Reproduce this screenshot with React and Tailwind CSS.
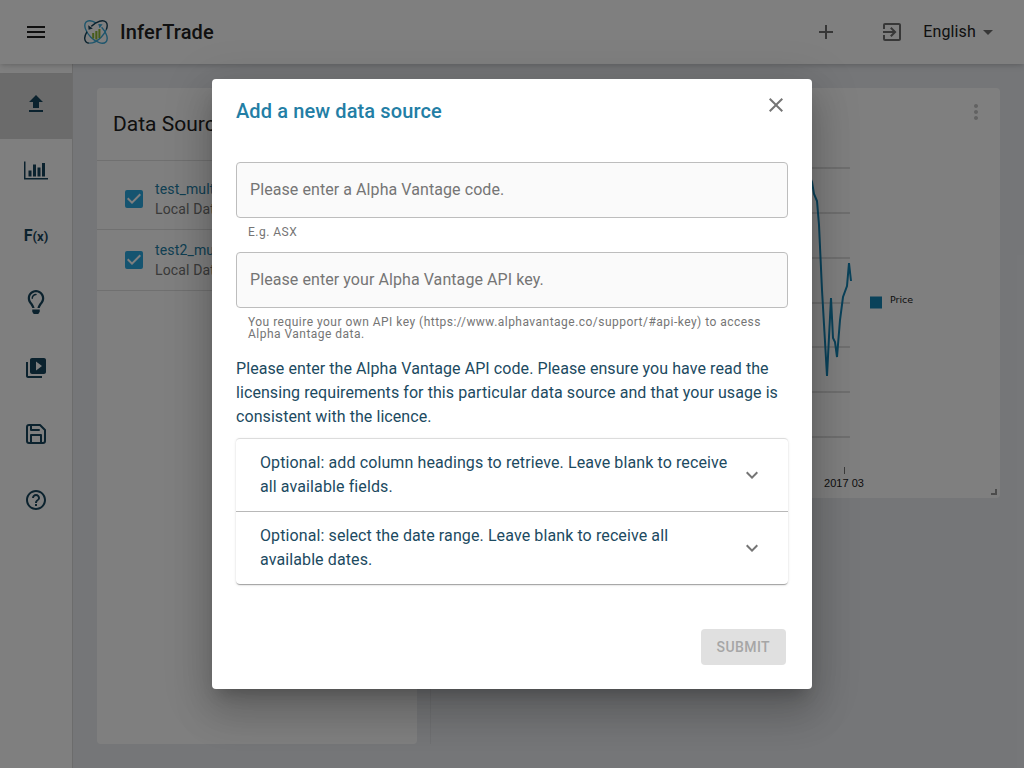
import React from 'react';
import {
  MdMenu, MdFileUpload, MdVideoLibrary, MdHelpOutline, MdAdd, MdExitToApp,
  MdArrowDropDown, MdMoreVert, MdClose, MdExpandMore, MdCheckBox,
} from 'react-icons/md';
import { FaRegLightbulb } from 'react-icons/fa';

function Logo() {
  return (
    <svg className="size-6" viewBox="0 0 24 24" fill="none">
      <g strokeWidth="1.4">
        <ellipse cx="12" cy="12" rx="14" ry="7.3" transform="rotate(45 12 12)" stroke="#3cabd9" pathLength="100" strokeDasharray="66 10 24 0" />
        <ellipse cx="12" cy="12" rx="14" ry="7.3" transform="rotate(-45 12 12)" stroke="#17455c" pathLength="100" strokeDasharray="12 33 21 10 24 0" />
        <ellipse cx="12" cy="12" rx="14" ry="7.3" transform="rotate(-45 12 12)" stroke="#3cabd9" pathLength="100" strokeDasharray="0 12 33 55" />
      </g>
      <path d="M4.2 5.2 L4.6 9.8 L8.8 8.4z" fill="#17455c" />
      <path d="M14.2 4 L18.6 4.2 L15.6 8.2z" fill="#3cabd9" />
      <path d="M8.2 13h2v5.500h-2zM11.300 11h2.100v8.500h-2.100zM14.400 9h2v9h-2z" fill="#8eb935" />
    </svg>
  );
}

function BarChartIcon() {
  return (
    <svg className="h-[21px] w-6" viewBox="0 0 2048 1792" fill="currentColor">
      <path d="M640 896v512h-256v-512h256zM1024 384v1024h-256v-1024h256zM2048 1536v128h-2048v-1536h128v1408h1920zM1408 640v768h-256v-768h256zM1792 256v1152h-256v-1152h256z" />
    </svg>
  );
}

function SaveIcon() {
  return (
    <svg className="size-6" viewBox="0 0 24 24" fill="none" stroke="currentColor" strokeWidth="2" strokeLinejoin="round" strokeLinecap="round">
      <path d="M19 21H5a2 2 0 0 1-2-2V5a2 2 0 0 1 2-2h11l5 5v11a2 2 0 0 1-2 2zM17 21v-8H7v8M7 3v5h8" />
    </svg>
  );
}

function NavItem({ selected, children }) {
  return (
    <div className={`flex h-[66px] items-center justify-center pb-1 text-[#17455c] ${selected ? 'bg-[#d6d6d6]' : ''}`}>
      {children}
    </div>
  );
}

function Source({ name, first }) {
  return (
    <div className={`flex items-center border-b border-[#e0e0e0] pl-[25px] ${first ? 'h-[69px] pt-2' : 'h-[61px]'}`}>
      <MdCheckBox className="size-6 shrink-0 text-[#2aa8e0]" />
      <div className="ml-[9px] whitespace-nowrap text-sm leading-5 tracking-[0.01071em]">
        <div className="text-[#237ea5]">{name}</div>
        <div className="text-[#757575]">Local Data</div>
      </div>
    </div>
  );
}

function Field({ placeholder, helper }) {
  return (
    <div>
      <div className="flex h-14 items-center rounded border border-[#bdbdbd] bg-[#fafafa] px-[13px] text-base text-[#757575] tracking-[0.075px]">
        {placeholder}
      </div>
      <p className="mx-3 mt-2 text-xs leading-3 tracking-[0.475px] text-[#757575]">{helper}</p>
    </div>
  );
}

function Panel({ children, divided }) {
  return (
    <div className={`flex h-[73px] items-center justify-between border-t px-6 ${divided ? 'border-[#b8b8b8]' : 'rounded-t border-[#dcdcdc]'}`}>
      <span className="w-[472px] text-base leading-6 tracking-[0.105px]">{children}</span>
      <MdExpandMore className="size-6 shrink-0 text-[#757575]" />
    </div>
  );
}

function PriceChart() {
  return (
    <svg className="h-[410px] w-[545px]" viewBox="455 88 545 410">
      <g stroke="#dedede" strokeWidth="2">
        <path d="M480 168H850M480 213H850M480 258H850M480 303H850M480 347H850M480 392H850M480 437H850" />
      </g>
      <polyline
        points="808,172 812,182 814,194 817,201 819,225 822,290 827,376 831,298 833,338 835,342 837,357 840,320 843,297 847,286 849,263 851,281"
        fill="none" stroke="#1484b5" strokeWidth="2"
      />
      <path d="M844.5 467v7" stroke="#777" />
      <rect x="870" y="296.500" width="12" height="12" fill="#1484b5" />
      <text x="890" y="303" fontSize="9.500" fill="#222" fontFamily="DejaVu Sans, sans-serif">Price</text>
      <text x="844" y="487" fontSize="11" fill="#222" textAnchor="middle" fontFamily="Liberation Sans, sans-serif">2017 03</text>
      <path d="M991 494H996V489" fill="none" stroke="#999" strokeWidth="2" />
    </svg>
  );
}

export default function App() {
  return (
    <div className="relative h-screen w-full overflow-hidden bg-[#ebedf1] font-['Roboto',sans-serif] text-[#212121]">
      <div className="flex h-full flex-col">
        <header className="z-10 flex h-16 shrink-0 items-center bg-white pr-6 pl-6 shadow-[0_2px_4px_-1px_rgba(0,0,0,0.14),0_1px_10px_0_rgba(0,0,0,0.1)]">
          <MdMenu className="size-6" />
          <div className="ml-9 flex items-center gap-3">
            <Logo />
            <span className="text-xl font-medium tracking-[0.0075em]">InferTrade</span>
          </div>
          <div className="ml-auto flex items-center text-[#6f6f6f]">
            <MdAdd className="size-6" />
            <MdExitToApp className="ml-[42px] size-6" />
            <span className="ml-[19px] text-base tracking-[0.00938em] text-[#212121]">English</span>
            <MdArrowDropDown className="size-6" />
          </div>
        </header>
        <div className="flex min-h-0 flex-1">
          <nav className="w-[73px] shrink-0 border-r border-[#d8d8d8] bg-white pt-[9px]">
            <NavItem selected><MdFileUpload className="size-6" /></NavItem>
            <NavItem><BarChartIcon /></NavItem>
            <NavItem>
              <span className="text-base leading-none font-bold whitespace-nowrap">F<span className="text-[13px]">(x)</span></span>
            </NavItem>
            <NavItem><FaRegLightbulb className="size-6" /></NavItem>
            <NavItem><MdVideoLibrary className="size-6" /></NavItem>
            <NavItem><SaveIcon /></NavItem>
            <NavItem><MdHelpOutline className="size-6" /></NavItem>
          </nav>
          <main className="flex flex-1 p-6">
            <section className="w-80 shrink-0 overflow-hidden rounded bg-white">
              <h2 className="flex h-[73px] items-center border-b border-[#e0e0e0] px-4 pt-0.5 text-[21px]">Data Sources</h2>
              <Source name="test_multi.csv" first />
              <Source name="test2_multi.csv" />
            </section>
            <div className="ml-[13px] flex flex-1 items-start justify-end border-l border-[#dfe1e5]">
              <section className="relative h-[410px] w-[545px] rounded bg-white">
                <PriceChart />
                <MdMoreVert className="absolute top-3 right-3 size-6 text-[#c4c4c4]" />
              </section>
            </div>
          </main>
        </div>
      </div>
      <div className="absolute inset-0 z-20 flex items-center justify-center bg-black/50">
        <div role="dialog" className="flex h-[610px] w-[600px] flex-col rounded bg-white px-6 shadow-[0_11px_15px_-7px_rgba(0,0,0,0.2),0_24px_38px_3px_rgba(0,0,0,0.14),0_9px_46px_8px_rgba(0,0,0,0.12)]">
          <div className="flex h-[83px] items-start justify-between">
            <h1 className="mt-4 text-xl leading-8 font-medium tracking-[0.0055em] text-[#237ea5]">Add a new data source</h1>
            <MdClose className="mt-[14px] size-6 text-[#757575]" />
          </div>
          <div className="flex flex-col gap-3.5">
            <Field placeholder="Please enter a Alpha Vantage code." helper="E.g. ASX" />
            <Field placeholder="Please enter your Alpha Vantage API key." helper="You require your own API key (https://www.alphavantage.co/support/#api-key) to access Alpha Vantage data." />
          </div>
          <p className="mt-[17px] text-base leading-6 tracking-[0.075px] text-[#1c4a61]">
            Please enter the Alpha Vantage API code. Please ensure you have read the licensing requirements for this particular data source and that your usage is consistent with the licence.
          </p>
          <div className="mt-[9px] rounded text-[#1c4a61] shadow-[0_2px_1px_-1px_rgba(0,0,0,0.2),0_1px_1px_0_rgba(0,0,0,0.14),0_1px_3px_0_rgba(0,0,0,0.12)]">
            <Panel>Optional: add column headings to retrieve. Leave blank to receive all available fields.</Panel>
            <Panel divided>Optional: select the date range. Leave blank to receive all available dates.</Panel>
          </div>
          <button className="mt-auto mr-0.5 mb-6 h-9 self-end rounded bg-[#e0e0e0] px-4 text-sm font-medium tracking-[0.02857em] text-[#a6a6a6]">SUBMIT</button>
        </div>
      </div>
    </div>
  );
}
